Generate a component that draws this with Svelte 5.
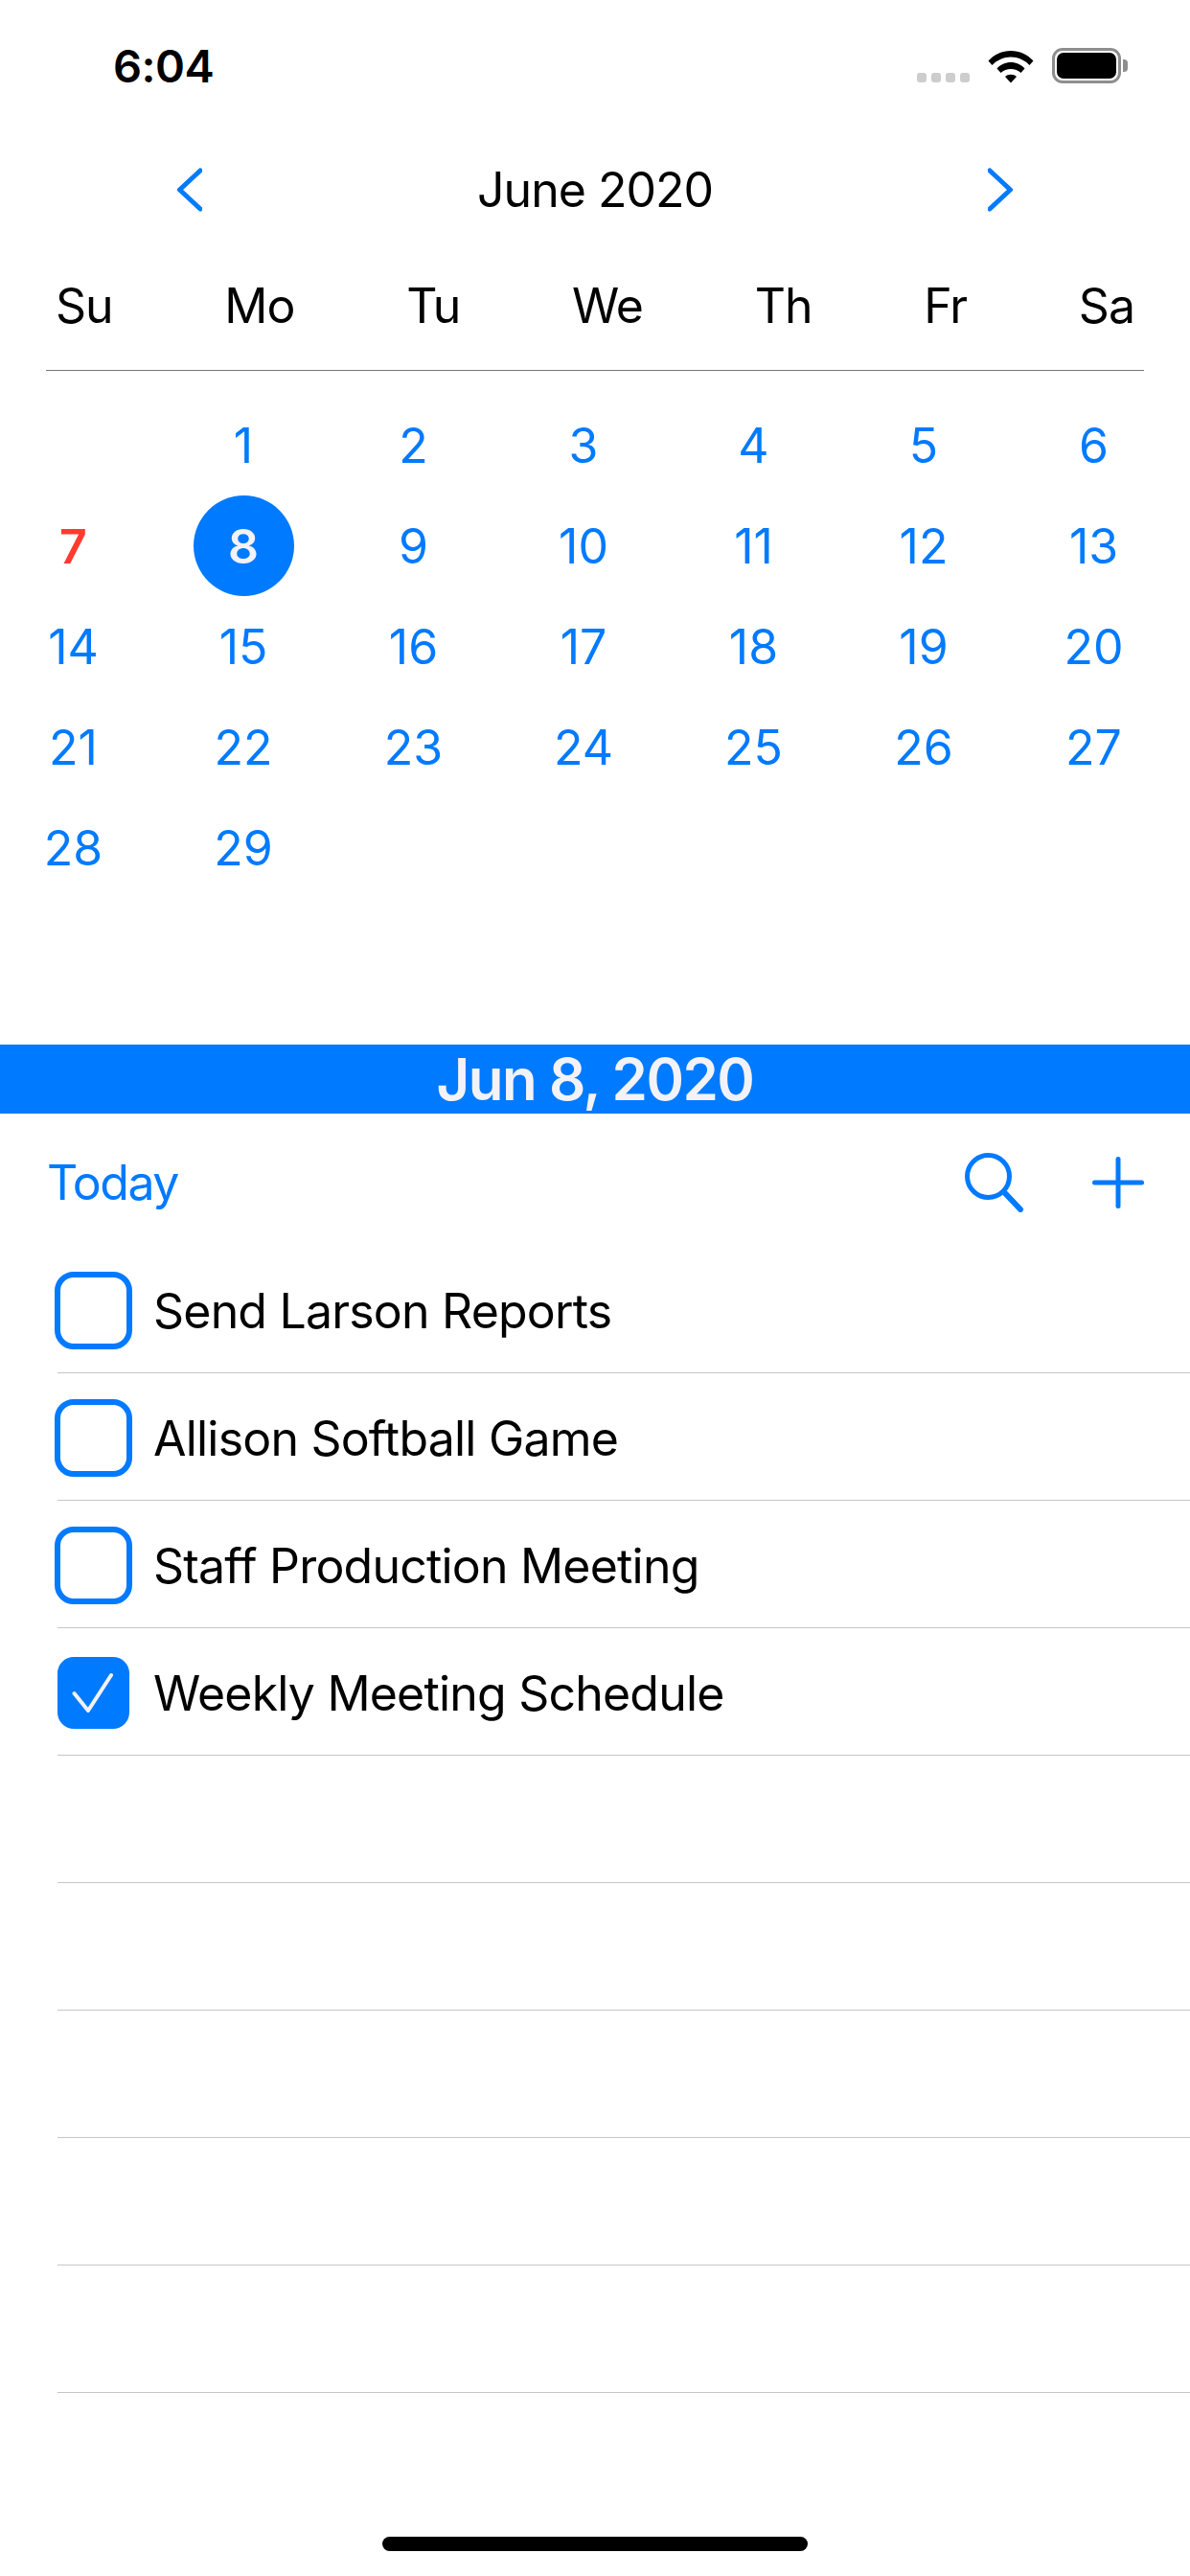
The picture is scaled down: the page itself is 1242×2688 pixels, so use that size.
<script>
	const blue = '#007aff';
	const weekdays = ['Su', 'Mo', 'Tu', 'We', 'Th', 'Fr', 'Sa'];
	const firstDay = 1; // June 2020 starts on a Monday
	const days = Array.from({ length: 29 }, (_, i) => i + 1);

	const tasks = [
		{ title: 'Send Larson Reports', done: false },
		{ title: 'Allison Softball Game', done: false },
		{ title: 'Staff Production Meeting', done: false },
		{ title: 'Weekly Meeting Schedule', done: true },
		{ title: '' },
		{ title: '' },
		{ title: '' },
		{ title: '' },
		{ title: '' }
	];
</script>

<div class="screen">
	<div class="status">
		<span class="time">6:04</span>
		<div class="status-icons">
			<div class="signal"><i></i><i></i><i></i><i></i></div>
			<svg class="wifi" width="48" height="36" viewBox="0 0 48 36">
				<path d="M0.5 12.5C6.5 6 15 2 24 2s17.500 4 23.500 10.500l-4 4.500C38 11.500 31.500 8.500 24 8.500S10 11.500 4.500 17z" fill="#000" />
				<path d="M9.500 20.500C13 16.500 18.500 14 24 14s11 2.500 14.500 6.500l-4 4.500C31.500 22.500 28 21 24 21s-7.500 1.500-10.500 4z" fill="#000" />
				<path d="M18 29c1.500-1.500 3.800-2.300 6-2.300s4.500.8 6 2.300l-6 6.500z" fill="#000" />
			</svg>
			<div class="battery"><div class="level"></div></div>
			<div class="nub"></div>
		</div>
	</div>

	<header class="month">
		<svg width="26" height="46" viewBox="0 0 26 46">
			<polyline points="24,3 2.500,23 24,43" fill="none" stroke={blue} stroke-width="5" stroke-linecap="round" stroke-linejoin="round" />
		</svg>
		<h1>June 2020</h1>
		<svg width="26" height="46" viewBox="0 0 26 46">
			<polyline points="2,3 23.500,23 2,43" fill="none" stroke={blue} stroke-width="5" stroke-linecap="round" stroke-linejoin="round" />
		</svg>
	</header>

	<div class="weekdays">
		{#each weekdays as d}
			<span>{d}</span>
		{/each}
	</div>

	<div class="days">
		{#each { length: firstDay } as _}
			<span></span>
		{/each}
		{#each days as d}
			<span class="day" class:today={d === 7} class:selected={d === 8}>{d}</span>
		{/each}
	</div>

	<div class="band">Jun 8, 2020</div>

	<div class="toolbar">
		<span class="today-link">Today</span>
		<div class="tools">
			<svg width="62" height="62" viewBox="0 0 62 62">
				<circle cx="24.500" cy="24.500" r="22" fill="none" stroke={blue} stroke-width="5" />
				<line x1="41" y1="41" x2="58" y2="59" stroke={blue} stroke-width="6" stroke-linecap="round" />
			</svg>
			<svg width="54" height="54" viewBox="0 0 54 54">
				<line x1="27" y1="2.500" x2="27" y2="51.500" stroke={blue} stroke-width="5" stroke-linecap="round" />
				<line x1="2.500" y1="27" x2="51.500" y2="27" stroke={blue} stroke-width="5" stroke-linecap="round" />
			</svg>
		</div>
	</div>

	<ul class="tasks">
		{#each tasks as task}
			<li>
				{#if task.title}
					<div class="check" class:done={task.done}>
						{#if task.done}
							<svg width="75" height="75" viewBox="0 0 75 75">
								<polyline points="17.500,38 32,56 56,19" fill="none" stroke="#f2f2f7" stroke-width="4" stroke-linecap="round" stroke-linejoin="round" />
							</svg>
						{/if}
					</div>
					<span class="title">{task.title}</span>
				{/if}
			</li>
		{/each}
	</ul>

	<div class="home"></div>
</div>

<style>
	:global(body) {
		margin: 0;
		background: #fff;
	}

	.screen {
		position: relative;
		width: 1242px;
		height: 2688px;
		overflow: hidden;
		background: #fff;
		font-family: Inter, 'Liberation Sans', sans-serif;
		color: #000;
	}

	.status {
		display: flex;
		align-items: center;
		justify-content: space-between;
		height: 136px;
		padding: 0 65px 0 118px;
		box-sizing: border-box;
	}
	.time {
		font-size: 47px;
		font-weight: 600;
		letter-spacing: -0.5px;
	}
	.status-icons {
		display: flex;
		align-items: flex-end;
	}
	.signal {
		display: flex;
		gap: 5px;
		margin: 0 19px 1px 0;
	}
	.signal i {
		width: 10px;
		height: 10px;
		border-radius: 3px;
		background: #cdcdcd;
	}
	.battery {
		width: 72px;
		height: 37px;
		margin-left: 19px;
		padding: 2px;
		box-sizing: border-box;
		border: 3px solid #8e8e8e;
		border-radius: 11px;
	}
	.level {
		height: 100%;
		border-radius: 7px;
		background: #000;
	}
	.nub {
		width: 5px;
		height: 13px;
		margin: 0 0 12px 2px;
		border-radius: 0 4px 4px 0;
		background: #8e8e8e;
	}

	.month {
		display: flex;
		align-items: center;
		justify-content: space-between;
		height: 124px;
		padding: 0 185px;
	}
	.month h1 {
		margin: 0;
		font-size: 50px;
		font-weight: 400;
		letter-spacing: -1px;
	}

	.weekdays {
		display: flex;
		justify-content: space-between;
		align-items: center;
		height: 127px;
		box-sizing: border-box;
		margin: 0 48px;
		padding: 0 10px 8px 10px;
		border-bottom: 1px solid #77777b;
		font-size: 50px;
		letter-spacing: -1px;
	}

	.days {
		display: grid;
		grid-template-columns: repeat(7, 105px);
		grid-auto-rows: 105px;
		justify-content: space-between;
		padding: 25px 48px 0 24px;
		color: #007aff;
		font-size: 50px;
	}
	.day {
		display: flex;
		align-items: center;
		justify-content: center;
		border-radius: 50%;
	}
	.day.today {
		color: #ff3b30;
		font-weight: 600;
	}
	.day.selected {
		background: #007aff;
		color: #f2f2f7;
		font-weight: 600;
	}

	.band {
		margin-top: 153px;
		height: 72px;
		background: #007aff;
		color: #f2f2f7;
		font-size: 60px;
		font-weight: 600;
		line-height: 72px;
		letter-spacing: -1.5px;
		text-align: center;
	}

	.toolbar {
		display: flex;
		align-items: center;
		justify-content: space-between;
		height: 138px;
		box-sizing: border-box;
		padding: 6px 48px 0 49px;
		color: #007aff;
		font-size: 50px;
		letter-spacing: -1.5px;
	}
	.tools {
		display: flex;
		align-items: center;
		gap: 71px;
	}

	.tasks {
		margin: 0 0 0 60px;
		padding: 0;
		list-style: none;
	}
	.tasks li {
		display: flex;
		align-items: center;
		gap: 22px;
		height: 133px;
		box-sizing: border-box;
		padding-top: 2px;
		border-bottom: 1.5px solid #c6c6c8;
		font-size: 50px;
		letter-spacing: -0.8px;
	}
	.title {
		padding-top: 2px;
	}
	.check {
		display: flex;
		align-items: center;
		justify-content: center;
		width: 81px;
		height: 81px;
		margin-left: -3px;
		box-sizing: border-box;
		border: 6px solid #007aff;
		border-radius: 20px;
	}
	.check.done {
		border: 3px solid transparent;
		background: #007aff;
		background-clip: padding-box;
	}

	.home {
		position: absolute;
		left: 399px;
		bottom: 26px;
		width: 444px;
		height: 15px;
		border-radius: 8px;
		background: #000;
	}
</style>
